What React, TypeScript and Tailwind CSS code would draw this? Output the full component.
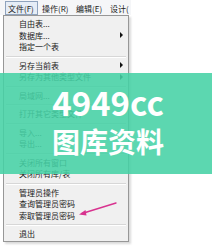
import React from "react";

type Item = { t: string; arrow?: boolean } | "sep";

const items: Item[] = [
  { t: "自由表..." },
  { t: "数据库...", arrow: true },
  { t: "指定一个表" },
  "sep",
  { t: "另存当前表", arrow: true },
  { t: "另存为其他类型文件", arrow: true },
  "sep",
  { t: "局域网...", arrow: true },
  "sep",
  { t: "打开其它类型文件" },
  "sep",
  { t: "导入...", arrow: true },
  { t: "导出..." },
  "sep",
  { t: "关闭所有窗口" },
  { t: "关闭所有库/表" },
  "sep",
  { t: "管理员操作" },
  { t: "查询管理员密码" },
  { t: "索取管理员密码" },
  "sep",
  { t: "退出" },
];

const font = { fontFamily: '"Noto Sans CJK SC", "Noto Sans", sans-serif' };

export default function App() {
  return (
    <div className="relative w-[212px] h-[250px] bg-white overflow-hidden" style={font}>
      <div className="w-[131px]">
        {/* menubar */}
        <div className="flex h-[15px] items-center bg-[#f5f6f8] text-[8px] leading-[13px] text-[#1a1a1a]">
          <div className="ml-[5px] w-[33px] h-[14px] border border-[#8fa3bd] bg-[#e6edf6] pl-[2px]">文件(F)</div>
          <div className="ml-[1px] w-[34px] h-[14px] border border-transparent pl-[2px]">操作(R)</div>
          <div className="w-[34px] h-[14px] border border-transparent pl-[2px]">编辑(E)</div>
          <div className="w-[23px] h-[14px] border border-transparent pl-[2px] overflow-hidden whitespace-nowrap">设计(</div>
        </div>
        {/* dropdown */}
        <div className="ml-[3px] w-[126px] border border-[#979797] bg-[#f0f0f0] pt-[2px] pb-[1.5px] shadow-[2px_2px_2px_rgba(0,0,0,0.15)]">
          {items.map((it, i) =>
            it === "sep" ? (
              <div key={i} className="mx-[2px] my-[3px] h-px bg-[#d7d7d7] shadow-[0_1px_0_#ffffff]" />
            ) : (
              <div key={i} className="flex h-[11.5px] items-center pl-[15px] pr-[5px] text-[8px] leading-[11.5px] text-[#1a1a1a] whitespace-nowrap">
                <span className="flex-1">{it.t}</span>
                {it.arrow && (
                  <span className="w-0 h-0 border-l-[3px] border-y-[3px] border-y-transparent border-l-[#111]" />
                )}
              </div>
            )
          )}
        </div>
      </div>

      {/* watermark banner */}
      <div className="absolute left-0 right-0 top-[73px] h-[101px] bg-[rgba(70,210,165,0.88)] flex flex-col items-center pl-[4px]">
        <div className="mt-[13px] text-[33px] leading-[33px] font-bold text-white tracking-[0px]">4949cc</div>
        <div className="mt-[7px] text-[28px] leading-[30px] font-bold text-white">图库资料</div>
      </div>

      {/* pink arrow */}
      <svg className="absolute left-0 top-0" width="212" height="250" viewBox="0 0 212 250">
        <line x1="116" y1="203" x2="82" y2="213.5" stroke="#d8338f" strokeWidth="1.4" strokeLinecap="round" />
        <path d="M79 214.5 L85.5 210 L86.5 215.5 Z" fill="#d8338f" />
      </svg>
    </div>
  );
}
